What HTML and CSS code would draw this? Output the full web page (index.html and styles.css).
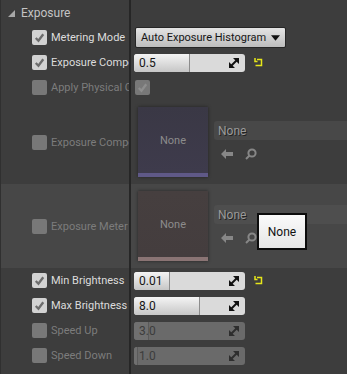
FILE: index.html
```html
<!DOCTYPE html>
<html lang="en">
<head>
    <meta charset="UTF-8">
    <title>Exposure details</title>
    <link rel="stylesheet" href="styles.css">
</head>
<body>
<div class="panel">

    <div class="row header">
        <div class="name"><span class="tri"></span><span class="title">Exposure</span></div>
        <div class="value"></div>
    </div>

    <div class="row">
        <div class="name">
            <span class="check"><svg viewBox="0 0 14 14"><path d="M3.5 7.5 L6 10 L10.5 4"/></svg></span>
            <span class="label">Metering Mode</span>
        </div>
        <div class="value">
            <div class="combo">Auto Exposure Histogram<svg class="caret" viewBox="0 0 10 6"><path d="M0 0 H10 L5 6 Z"/></svg></div>
        </div>
    </div>

    <div class="row">
        <div class="name">
            <span class="check"><svg viewBox="0 0 14 14"><path d="M3.5 7.5 L6 10 L10.5 4"/></svg></span>
            <span class="label">Exposure Compensation</span>
        </div>
        <div class="value">
            <div class="slider">
                <div class="fill" style="width:56px"></div>
                <span class="num">0.5</span>
                <svg class="drag" viewBox="0 0 10 10"><path d="M4 0 H10 V6 Z M0 4 V10 H6 Z"/><path class="ln" d="M2 8 L8 2"/></svg>
            </div>
            <svg class="reset" viewBox="0 0 9 9"><path d="M3 1.5 H7.5 V7.5 H1.5"/><path class="hd" d="M1 0 V3.5 H3.5"/></svg>
        </div>
    </div>

    <div class="row off">
        <div class="name">
            <span class="check"></span>
            <span class="label">Apply Physical Camera Exposure</span>
        </div>
        <div class="value">
            <span class="check vcheck"><svg viewBox="0 0 14 14"><path d="M3.5 7.5 L6 10 L10.5 4"/></svg></span>
        </div>
    </div>

    <div class="row tall off">
        <div class="name">
            <span class="check"></span>
            <span class="label">Exposure Compensation Curve</span>
        </div>
        <div class="value">
            <div class="thumb curve"><span>None</span></div>
            <div class="asset">
                <div class="pick">None</div>
                <div class="tools">
                    <svg class="back" viewBox="0 0 12 10"><path d="M0 5 L5 0 V3 H12 V7 H5 V10 Z"/></svg>
                    <svg class="find" viewBox="0 0 12 12"><circle cx="7" cy="5" r="3.6"/><path d="M4.5 7.5 L1 11"/></svg>
                </div>
            </div>
        </div>
    </div>

    <div class="row tall off hover">
        <div class="name">
            <span class="check"></span>
            <span class="label">Exposure Meter Mask</span>
        </div>
        <div class="value">
            <div class="thumb mask"><span>None</span></div>
            <div class="asset">
                <div class="pick">None</div>
                <div class="tools">
                    <svg class="back" viewBox="0 0 12 10"><path d="M0 5 L5 0 V3 H12 V7 H5 V10 Z"/></svg>
                    <svg class="find" viewBox="0 0 12 12"><circle cx="7" cy="5" r="3.6"/><path d="M4.5 7.5 L1 11"/></svg>
                </div>
            </div>
            <div class="tip">None</div>
        </div>
    </div>

    <div class="row">
        <div class="name">
            <span class="check"><svg viewBox="0 0 14 14"><path d="M3.5 7.5 L6 10 L10.5 4"/></svg></span>
            <span class="label">Min Brightness</span>
        </div>
        <div class="value">
            <div class="slider">
                <div class="fill" style="width:36px"></div>
                <span class="num">0.01</span>
                <svg class="drag" viewBox="0 0 10 10"><path d="M4 0 H10 V6 Z M0 4 V10 H6 Z"/><path class="ln" d="M2 8 L8 2"/></svg>
            </div>
            <svg class="reset" viewBox="0 0 9 9"><path d="M3 1.5 H7.5 V7.5 H1.5"/><path class="hd" d="M1 0 V3.5 H3.5"/></svg>
        </div>
    </div>

    <div class="row">
        <div class="name">
            <span class="check"><svg viewBox="0 0 14 14"><path d="M3.5 7.5 L6 10 L10.5 4"/></svg></span>
            <span class="label">Max Brightness</span>
        </div>
        <div class="value">
            <div class="slider">
                <div class="fill" style="width:66px"></div>
                <span class="num">8.0</span>
                <svg class="drag" viewBox="0 0 10 10"><path d="M4 0 H10 V6 Z M0 4 V10 H6 Z"/><path class="ln" d="M2 8 L8 2"/></svg>
            </div>
        </div>
    </div>

    <div class="row off">
        <div class="name">
            <span class="check"></span>
            <span class="label">Speed Up</span>
        </div>
        <div class="value">
            <div class="slider">
                <div class="fill" style="width:15px"></div>
                <span class="num">3.0</span>
                <svg class="drag" viewBox="0 0 10 10"><path d="M4 0 H10 V6 Z M0 4 V10 H6 Z"/><path class="ln" d="M2 8 L8 2"/></svg>
            </div>
        </div>
    </div>

    <div class="row off">
        <div class="name">
            <span class="check"></span>
            <span class="label">Speed Down</span>
        </div>
        <div class="value">
            <div class="slider">
                <div class="fill" style="width:4px"></div>
                <span class="num">1.0</span>
                <svg class="drag" viewBox="0 0 10 10"><path d="M4 0 H10 V6 Z M0 4 V10 H6 Z"/><path class="ln" d="M2 8 L8 2"/></svg>
            </div>
        </div>
    </div>

    <div class="row rest">
        <div class="name"></div>
        <div class="value"></div>
    </div>

</div>
</body>
</html>
```

FILE: styles.css
```css
* {
    margin: 0;
    padding: 0;
    box-sizing: border-box;
}
body {
    background-color: #3d3d3d;
    font-family: Roboto, "Liberation Sans", sans-serif;
    font-size: 11px;
    color: #dcdcdc;
}
.panel {
    width: 347px;
    height: 374px;
    display: flex;
    flex-direction: column;
    border-left: 1px solid #303030;
    overflow: hidden;
}
.row {
    display: flex;
    height: 25px;
    flex-shrink: 0;
}
.row.tall {
    height: 84px;
}
.row.rest {
    flex: 1;
}
.hover {
    background-color: #474747;
}
.name {
    width: 128px;
    display: flex;
    align-items: center;
    gap: 4px;
    padding-left: 31px;
    overflow: hidden;
    white-space: nowrap;
}
.value {
    flex: 1;
    display: flex;
    align-items: center;
    border-left: 2px solid #262626;
    padding-left: 3px;
    position: relative;
}

/* header */
.header .name {
    padding-left: 7px;
    gap: 6px;
}
.tri {
    width: 0;
    height: 0;
    border-left: 7px solid transparent;
    border-bottom: 7px solid #a8a8a8;
    margin-top: 1px;
}
.title {
    font-size: 12px;
    color: #c4c4c4;
}

/* checkbox */
.check {
    width: 15px;
    height: 15px;
    flex-shrink: 0;
    border-radius: 2px;
    background-color: #d2d2d2;
    display: flex;
}
.check svg {
    width: 15px;
    height: 15px;
    fill: none;
    stroke: #6c6c6c;
    stroke-width: 2.2;
}
.off .label {
    color: #7c7c7c;
}
.off .check {
    background-color: #787878;
}
.vcheck {
    margin-left: 1px;
}
.off .vcheck svg {
    stroke: #8e8e8e;
}

/* combo */
.combo {
    margin-left: 1px;
    width: 151px;
    height: 21px;
    border: 1px solid #262626;
    border-radius: 2px;
    background: linear-gradient(#e4e4e4, #bdbdbd);
    color: #151515;
    display: flex;
    align-items: center;
    padding-left: 5px;
    gap: 5px;
    white-space: nowrap;
}
.caret {
    width: 9px;
    height: 6px;
    fill: #111;
}

/* slider */
.slider {
    position: relative;
    width: 111px;
    height: 18px;
    border-radius: 3px;
    background-color: #dadada;
    display: flex;
    align-items: center;
    justify-content: space-between;
    padding: 0 6px 0 5px;
    overflow: hidden;
}
.fill {
    position: absolute;
    left: 0;
    top: 0;
    bottom: 0;
    background: linear-gradient(#f4f4f4, #c6c6c6);
    border-right: 1px solid #8c8c8c;
}
.num {
    position: relative;
    color: #151515;
    font-size: 12px;
}
.drag {
    position: relative;
    width: 10px;
    height: 10px;
    fill: #111;
}
.drag .ln {
    stroke: #111;
    stroke-width: 2;
}
.off .slider {
    background-color: #6a6a6a;
}
.off .fill {
    background: #707070;
    border-right-color: #5a5a5a;
}
.off .num {
    color: #3c3c3c;
}
.off .drag {
    fill: #2e2e2e;
}
.off .drag .ln {
    stroke: #2e2e2e;
}
.reset {
    width: 9px;
    height: 9px;
    margin-left: 9px;
    fill: none;
    stroke: #e6e61a;
    stroke-width: 1.5;
}

/* asset thumbnails */
.tall .value {
    align-items: flex-start;
    padding-top: 7px;
    padding-left: 7px;
}
.thumb {
    width: 70px;
    height: 70px;
    flex-shrink: 0;
    display: flex;
    align-items: center;
    justify-content: center;
    color: #8c8c8c;
    box-shadow: 0 0 3px #222;
}
.curve {
    background: linear-gradient(#3a3845, #3e3b4c);
    border-bottom: 4px solid #5f5987;
}
.mask {
    background: linear-gradient(#463f3f, #443d3e);
    border-bottom: 4px solid #8a7474;
}
.asset {
    flex: 1;
    margin-left: 6px;
    padding-top: 14px;
}
.pick {
    height: 19px;
    background-color: #484848;
    border-radius: 3px 0 0 3px;
    color: #9a9a9a;
    padding-left: 4px;
    display: flex;
    align-items: center;
    font-size: 12px;
    text-shadow: 1px 1px 0 #222;
}
.hover .pick {
    background-color: #4e4e4e;
}
.tools {
    display: flex;
    align-items: center;
    gap: 12px;
    padding: 8px 0 0 7px;
}
.back {
    width: 12px;
    height: 10px;
    fill: #878787;
}
.find {
    width: 12px;
    height: 12px;
    fill: none;
    stroke: #878787;
    stroke-width: 2;
}
.tip {
    position: absolute;
    left: 126px;
    top: 29px;
    width: 50px;
    height: 37px;
    background: linear-gradient(#fafafa, #e6e6e6);
    border: 2px solid #0c0c0c;
    color: #111;
    font-size: 12px;
    display: flex;
    align-items: center;
    justify-content: center;
}
```
